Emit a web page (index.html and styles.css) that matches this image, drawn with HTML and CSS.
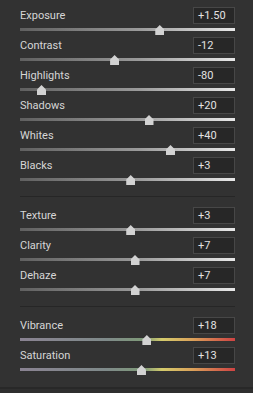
FILE: index.html
```html
<!DOCTYPE html>
<html lang="en">
<head>
  <meta charset="UTF-8" />
  <meta name="viewport" content="width=device-width, initial-scale=1.0" />
  <title>Basic Adjustments</title>
  <link rel="stylesheet" href="styles.css">
</head>
<body>
  <div class="panel">
    <div class="group">
      <div class="row">
        <div class="head"><span class="label">Exposure</span><span class="value">+1.50</span></div>
        <div class="track"><span class="thumb" style="left: 65%"></span></div>
      </div>
      <div class="row">
        <div class="head"><span class="label">Contrast</span><span class="value">-12</span></div>
        <div class="track"><span class="thumb" style="left: 44%"></span></div>
      </div>
      <div class="row">
        <div class="head"><span class="label">Highlights</span><span class="value">-80</span></div>
        <div class="track"><span class="thumb" style="left: 10%"></span></div>
      </div>
      <div class="row">
        <div class="head"><span class="label">Shadows</span><span class="value">+20</span></div>
        <div class="track"><span class="thumb" style="left: 60%"></span></div>
      </div>
      <div class="row">
        <div class="head"><span class="label">Whites</span><span class="value">+40</span></div>
        <div class="track"><span class="thumb" style="left: 70%"></span></div>
      </div>
      <div class="row">
        <div class="head"><span class="label">Blacks</span><span class="value">+3</span></div>
        <div class="track"><span class="thumb" style="left: 51.5%"></span></div>
      </div>
    </div>

    <div class="sep"></div>

    <div class="group">
      <div class="row">
        <div class="head"><span class="label">Texture</span><span class="value">+3</span></div>
        <div class="track"><span class="thumb" style="left: 51.5%"></span></div>
      </div>
      <div class="row">
        <div class="head"><span class="label">Clarity</span><span class="value">+7</span></div>
        <div class="track"><span class="thumb" style="left: 53.5%"></span></div>
      </div>
      <div class="row">
        <div class="head"><span class="label">Dehaze</span><span class="value">+7</span></div>
        <div class="track"><span class="thumb" style="left: 53.5%"></span></div>
      </div>
    </div>

    <div class="sep"></div>

    <div class="group">
      <div class="row">
        <div class="head"><span class="label">Vibrance</span><span class="value">+18</span></div>
        <div class="track color"><span class="thumb" style="left: 59%"></span></div>
      </div>
      <div class="row">
        <div class="head"><span class="label">Saturation</span><span class="value">+13</span></div>
        <div class="track color"><span class="thumb" style="left: 56.5%"></span></div>
      </div>
    </div>
  </div>
  <div class="footer"></div>
</body>
</html>
```

FILE: styles.css
```css
* {
  box-sizing: border-box;
}

html, body {
  height: 100%;
}

body {
  margin: 0;
  background: #323232;
  font-family: Roboto, "Liberation Sans", sans-serif;
  font-size: 11px;
  color: #d8d8d8;
  display: flex;
  flex-direction: column;
}

.panel {
  padding: 7px 18px 0 20px;
}

.row {
  height: 30px;
}

.head {
  display: flex;
  justify-content: space-between;
  align-items: center;
  height: 17px;
}

.label {
  color: #d6d6d6;
}

.value {
  width: 42px;
  height: 17px;
  line-height: 15px;
  padding-left: 4px;
  background: #272727;
  border: 1px solid #474747;
  color: #e2e2e2;
}

.track {
  position: relative;
  height: 3px;
  margin-top: 4px;
  background: linear-gradient(to right, #606060, #9a9a9a 55%, #e8e8e8);
}

.track.color {
  background: linear-gradient(to right, #8a8392, #7f8a8a 40%, #7f9b78 58%, #d4cb6c 66%, #daa25a 80%, #cf4343);
}

.thumb {
  position: absolute;
  top: -3px;
  width: 9px;
  height: 10px;
  margin-left: -4.5px;
  background: #d2d2d2;
  clip-path: polygon(50% 0, 100% 45%, 100% 100%, 0 100%, 0 45%);
}

.sep {
  height: 1px;
  margin: 9px 0 10px;
  background: #262626;
}

.footer {
  margin-top: 10px;
  flex: 1;
  border-top: 2px solid #282828;
  background: #2f2f2f;
}
```
